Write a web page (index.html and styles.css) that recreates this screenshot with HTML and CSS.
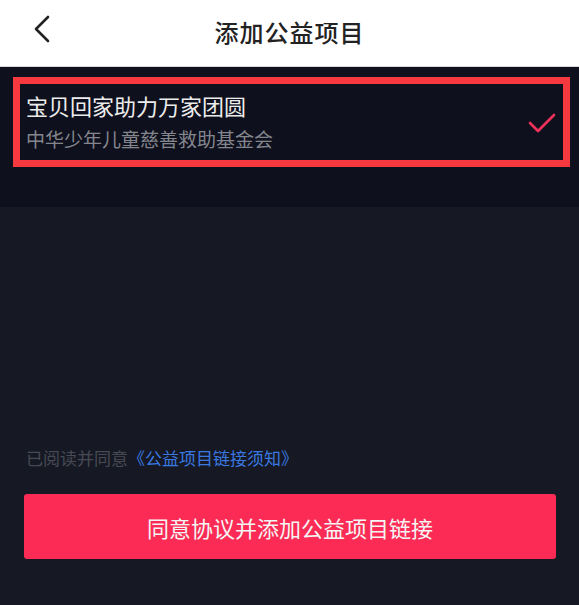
FILE: index.html
```html
<!DOCTYPE html>
<html lang="zh-CN">
<head>
  <meta charset="UTF-8" />
  <meta name="viewport" content="width=device-width, initial-scale=1" />
  <title>添加公益项目</title>
  <link rel="stylesheet" href="styles.css">
</head>
<body>
  <header class="topbar">
    <a class="back" href="#">
      <svg width="17" height="28" viewBox="0 0 17 28"><path d="M15 2 L3 14 L15 26" fill="none" stroke="#222" stroke-width="2.6" stroke-linecap="round" stroke-linejoin="round"/></svg>
    </a>
    <h1>添加公益项目</h1>
  </header>

  <section class="picked">
    <div class="project">
      <div class="project-text">
        <div class="project-title">宝贝回家助力万家团圆</div>
        <div class="project-org">中华少年儿童慈善救助基金会</div>
      </div>
      <svg class="check" width="28" height="20" viewBox="0 0 28 20"><path d="M2 10 L10 18 L26 2" fill="none" stroke="#f0325a" stroke-width="2.6" stroke-linecap="round" stroke-linejoin="round"/></svg>
    </div>
  </section>

  <section class="bottom">
    <p class="agree">已阅读并同意<a href="#">《公益项目链接须知》</a></p>
    <button class="submit">同意协议并添加公益项目链接</button>
  </section>
</body>
</html>
```

FILE: styles.css
```css
body {
  margin: 0;
  background: #161923;
  font-family: "Noto Sans CJK SC", "Noto Sans", sans-serif;
  height: 605px;
  overflow: hidden;
}

.topbar {
  height: 66px;
  background: #fff;
  border-bottom: 1px solid #d8d8d8;
  position: relative;
  display: flex;
  align-items: center;
  justify-content: center;
}

.topbar h1 {
  margin: 0 0 4px;
  font-size: 24px;
  font-weight: 500;
  color: #222;
  letter-spacing: 1px;
}

.back {
  position: absolute;
  left: 33px;
  top: 15px;
}

.picked {
  background: #0e101d;
  height: 140px;
  padding: 10px 9px 0 13px;
  box-sizing: border-box;
}

.project {
  border: 7px solid #f5393f;
  height: 90px;
  box-sizing: border-box;
  display: flex;
  align-items: center;
  justify-content: space-between;
  padding: 0 7px 0 6px;
}

.project-text {
  margin-top: -2px;
}

.project-title {
  font-size: 22px;
  line-height: 30px;
  color: #ececec;
}

.project-org {
  margin-top: 6px;
  font-size: 19px;
  line-height: 26px;
  color: #84868e;
}

.check {
  margin-top: 2px;
}

.bottom {
  padding: 239px 23px 0 24px;
}

.agree {
  margin: 0 0 0 2px;
  font-size: 17px;
  line-height: 24px;
  color: #474a54;
}

.agree a {
  color: #3a78e0;
  text-decoration: none;
}

.submit {
  display: block;
  width: 100%;
  height: 65px;
  margin-top: 24px;
  border: none;
  border-radius: 3px;
  background: #fc2b55;
  color: #f4f4f4;
  font-family: inherit;
  font-size: 22px;
}
```
